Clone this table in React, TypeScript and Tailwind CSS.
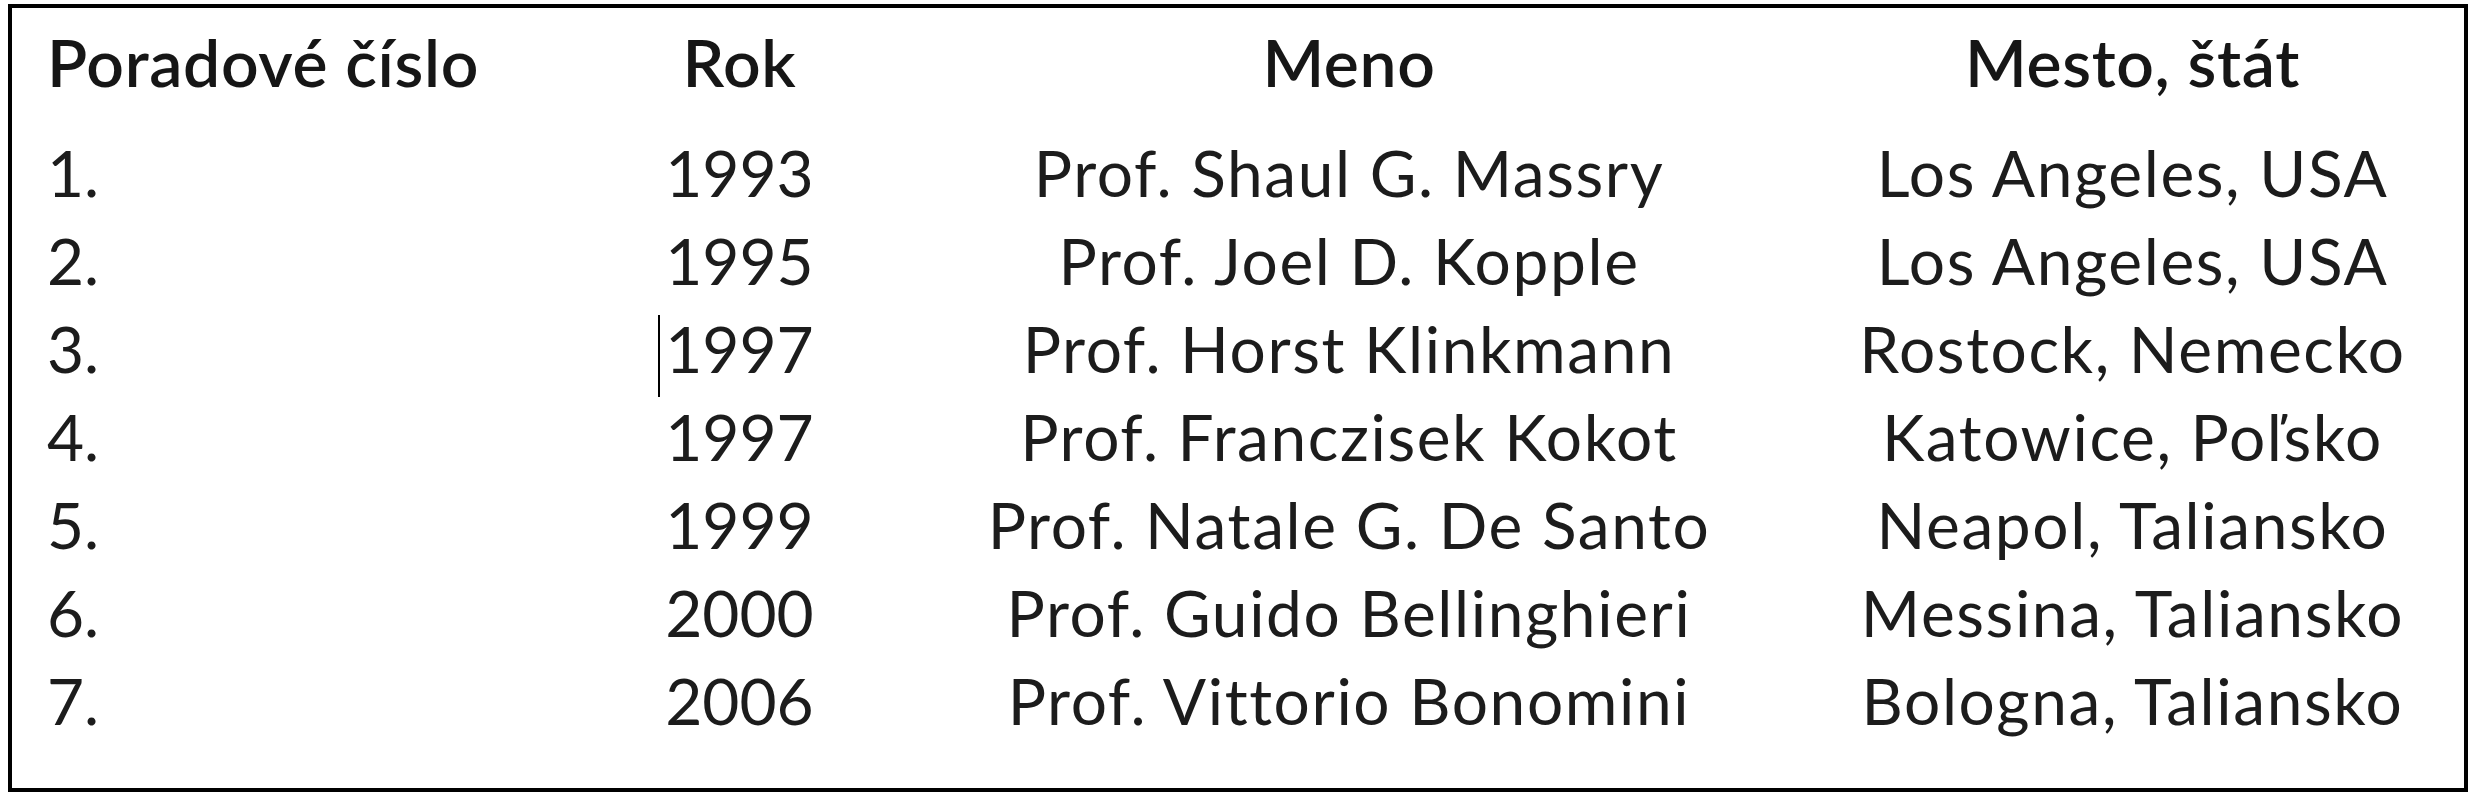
import React from "react";

const rows = [
  ["1.", "1993", "Prof. Shaul G. Massry", "Los Angeles, USA"],
  ["2.", "1995", "Prof. Joel D. Kopple", "Los Angeles, USA"],
  ["3.", "1997", "Prof. Horst Klinkmann", "Rostock, Nemecko"],
  ["4.", "1997", "Prof. Franczisek Kokot", "Katowice, Poľsko"],
  ["5.", "1999", "Prof. Natale G. De Santo", "Neapol, Taliansko"],
  ["6.", "2000", "Prof. Guido Bellinghieri", "Messina, Taliansko"],
  ["7.", "2006", "Prof. Vittorio Bonomini", "Bologna, Taliansko"],
];

export default function App() {
  return (
    <div className="w-[2484px] h-[800px] bg-white pt-[4px] pl-[8px] font-['Lato',_'Noto_Sans',sans-serif] text-[#161616]">
      <div className="w-[2460px] h-[788px] border-[4px] border-black pt-[10px]">
        <div className="grid grid-cols-[570px_315px_904px_663px] text-[66px] leading-[88px] font-semibold tracking-[0.01em] whitespace-nowrap">
          <div className="pl-[35px]">Poradové číslo</div>
          <div className="text-center">Rok</div>
          <div className="text-center">Meno</div>
          <div className="text-center">Mesto, štát</div>
        </div>
        <div className="mt-[23px] grid grid-cols-[570px_315px_904px_663px] text-[64px] leading-[88px] font-normal text-[#1c1c1c] whitespace-nowrap">
          {rows.map((r, i) => (
            <React.Fragment key={i}>
              <div className="pl-[35px]">{r[0]}</div>
              <div className="text-center">
                <span className="relative">
                  {i === 2 && (
                    <span className="absolute left-[-7px] top-[5px] h-[82px] w-[2px] bg-black" />
                  )}
                  {r[1]}
                </span>
              </div>
              <div className="text-center tracking-[0.025em]">{r[2]}</div>
              <div className="text-center tracking-[0.025em]">{r[3]}</div>
            </React.Fragment>
          ))}
        </div>
      </div>
    </div>
  );
}
